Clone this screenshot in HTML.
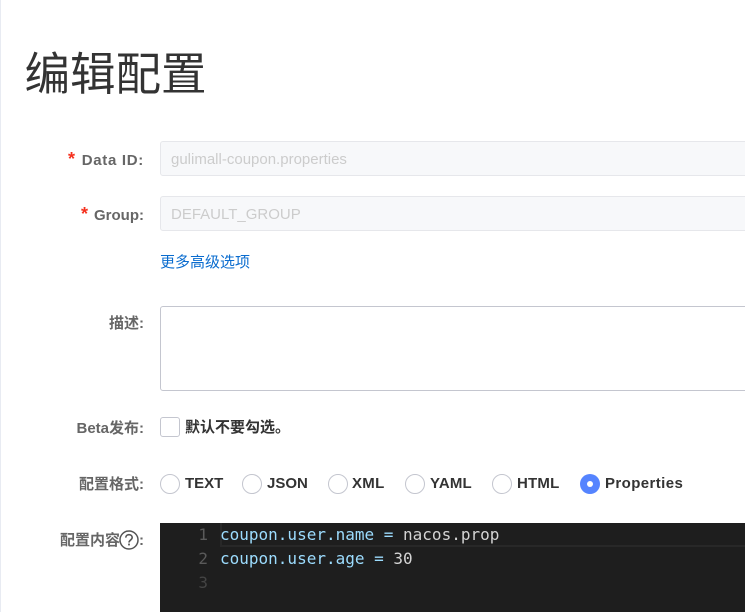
<!DOCTYPE html>
<html><head><meta charset="utf-8"><style>
html,body{margin:0;padding:0;width:745px;height:612px;overflow:hidden;background:#fff}
body{position:relative;font-family:"Liberation Sans","Noto Sans CJK SC",sans-serif}
.a{position:absolute;white-space:nowrap}
.lb{right:601px;font-size:15px;font-weight:bold;color:#666;line-height:20px;text-align:right}
.lb i{font-style:normal;color:#f5301e;margin-right:6px;font-size:18px}
.in{left:160px;width:600px;box-sizing:border-box;border:1px solid #e6e7eb;border-radius:3px;background:#f7f8fa;height:35px;color:#ccc;font-size:15px;line-height:35px;padding-left:10px}
.r{width:20px;height:20px;box-sizing:border-box;border:1px solid #c4c6cf;border-radius:50%;top:474px;background:#fff}
.t{top:474px;font-size:15px;font-weight:bold;color:#333;line-height:20px}
.m{font-family:"DejaVu Sans Mono",monospace;font-size:16px;line-height:24px;color:#d4d4d4}
.b{color:#9cdcfe}.n{color:#5a5a5a;left:160px;width:48px;text-align:right}
</style></head><body>
<div class="a" style="left:0;top:0;width:1px;height:612px;background:#e8ebf2"></div>
<div class="a" style="left:24.5px;top:47px;font-size:45.5px;line-height:56px;color:#333">编辑配置</div>
<div class="a lb" style="top:149px;letter-spacing:.7px"><i>*</i>Data ID:</div>
<div class="a in" style="top:141px">gulimall-coupon.properties</div>
<div class="a lb" style="top:204px"><i>*</i>Group:</div>
<div class="a in" style="top:196px">DEFAULT_GROUP</div>
<div class="a" style="left:160px;top:253px;font-size:15px;line-height:20px;color:#0a6ccf">更多高级选项</div>
<div class="a lb" style="top:314px">描述:</div>
<div class="a" style="left:160px;top:306px;width:600px;height:85px;box-sizing:border-box;border:1px solid #c4c6cf;border-radius:3px"></div>
<div class="a lb" style="top:419px">Beta发布:</div>
<div class="a" style="left:160px;top:417px;width:20px;height:20px;box-sizing:border-box;border:1px solid #c4c6cf;border-radius:3px"></div>
<div class="a t" style="left:185px;top:418px">默认不要勾选。</div>
<div class="a lb" style="top:475px">配置格式:</div>
<div class="a r" style="left:160px"></div><div class="a t" style="left:185px">TEXT</div>
<div class="a r" style="left:242px"></div><div class="a t" style="left:267px">JSON</div>
<div class="a r" style="left:328px"></div><div class="a t" style="left:352px;letter-spacing:.3px">XML</div>
<div class="a r" style="left:405px"></div><div class="a t" style="left:430px;letter-spacing:.2px">YAML</div>
<div class="a r" style="left:492px"></div><div class="a t" style="left:517px;letter-spacing:.2px">HTML</div>
<div class="a r" style="left:580px;border:0;background:#5584ff"></div>
<div class="a" style="left:587px;top:481px;width:6px;height:6px;border-radius:50%;background:#fff"></div>
<div class="a t" style="left:605px;letter-spacing:.4px">Properties</div>
<div class="a lb" style="top:531px;right:625px">配置内容</div>
<svg class="a" style="left:119px;top:530px" width="20" height="20" viewBox="0 0 20 20"><circle cx="10" cy="10" r="9" fill="none" stroke="#555" stroke-width="1.5"/><path d="M6.8 7.6C6.8 5.8 8.2 4.7 10 4.7s3.2 1.1 3.2 2.8c0 2.4-3.2 2.5-3.2 5" fill="none" stroke="#555" stroke-width="1.6"/><rect x="9.1" y="13.6" width="1.8" height="1.8" fill="#555"/></svg>
<div class="a lb" style="top:531px">:</div>
<div class="a" style="left:160px;top:523px;width:585px;height:89px;background:#1e1e1e"></div>
<div class="a" style="left:220px;top:523px;width:525px;height:24px;box-sizing:border-box;border:2px solid #282828;border-right:0;border-top:0"></div>
<div class="a m n" style="top:523px">1</div>
<div class="a m n" style="top:547px">2</div>
<div class="a m n" style="top:571px;color:#444">3</div>
<div class="a m" style="left:220px;top:523px"><span class="b">coupon.user.name = </span>nacos.prop</div>
<div class="a m" style="left:220px;top:547px"><span class="b">coupon.user.age = </span>30</div>
</body></html>
